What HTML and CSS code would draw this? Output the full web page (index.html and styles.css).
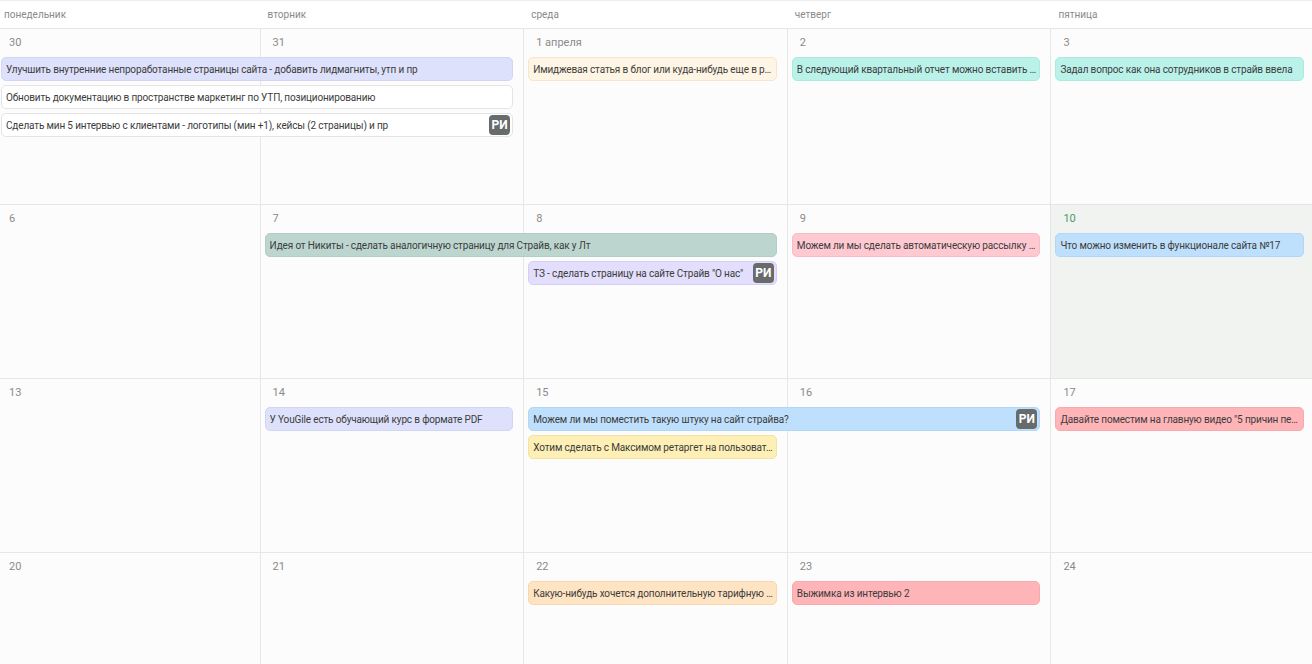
FILE: index.html
```html
<!DOCTYPE html>
<html lang="ru">
    <head>
        <meta charset="utf-8">
        <link rel="stylesheet" href="styles.css">
    </head>
    <body>
        <div class="calendar">
            <div class="weekdays">
                <div class="weekday">понедельник</div>
                <div class="weekday">вторник</div>
                <div class="weekday">среда</div>
                <div class="weekday">четверг</div>
                <div class="weekday">пятница</div>
            </div>

            <div class="week first">
                <div class="day col-1"><span class="num">30</span></div>
                <div class="day col-2"><span class="num">31</span></div>
                <div class="day col-3"><span class="num">1 апреля</span></div>
                <div class="day col-4"><span class="num">2</span></div>
                <div class="day col-5"><span class="num">3</span></div>

                <div class="event lavender col-1 span-2 line-1"><span class="title">Улучшить внутренние непроработанные страницы сайта - добавить лидмагниты, утп и пр</span></div>
                <div class="event plain col-1 span-2 line-2"><span class="title">Обновить документацию в пространстве маркетинг по УТП, позиционированию</span></div>
                <div class="event plain col-1 span-2 line-3"><span class="title">Сделать мин 5 интервью с клиентами - логотипы (мин +1), кейсы (2 страницы) и пр</span><span class="avatar">РИ</span></div>
                <div class="event cream col-3 line-1"><span class="title">Имиджевая статья в блог или куда-нибудь еще в разрезе</span></div>
                <div class="event mint col-4 line-1"><span class="title">В следующий квартальный отчет можно вставить блок</span></div>
                <div class="event mint col-5 line-1"><span class="title">Задал вопрос как она сотрудников в страйв ввела</span></div>
            </div>

            <div class="week">
                <div class="day col-1"><span class="num">6</span></div>
                <div class="day col-2"><span class="num">7</span></div>
                <div class="day col-3"><span class="num">8</span></div>
                <div class="day col-4"><span class="num">9</span></div>
                <div class="day col-5 today"><span class="num">10</span></div>

                <div class="event sage col-2 span-2 line-1"><span class="title">Идея от Никиты - сделать аналогичную страницу для Страйв, как у Лт</span></div>
                <div class="event violet col-3 line-2"><span class="title">ТЗ - сделать страницу на сайте Страйв "О нас"</span><span class="avatar">РИ</span></div>
                <div class="event pink col-4 line-1"><span class="title">Можем ли мы сделать автоматическую рассылку клиентам</span></div>
                <div class="event sky col-5 line-1"><span class="title">Что можно изменить в функционале сайта №17</span></div>
            </div>

            <div class="week">
                <div class="day col-1"><span class="num">13</span></div>
                <div class="day col-2"><span class="num">14</span></div>
                <div class="day col-3"><span class="num">15</span></div>
                <div class="day col-4"><span class="num">16</span></div>
                <div class="day col-5"><span class="num">17</span></div>

                <div class="event lavender col-2 line-1"><span class="title">У YouGile есть обучающий курс в формате PDF</span></div>
                <div class="event sky col-3 span-2 line-1"><span class="title">Можем ли мы поместить такую штуку на сайт страйва?</span><span class="avatar">РИ</span></div>
                <div class="event lemon col-3 line-2"><span class="title">Хотим сделать с Максимом ретаргет на пользователей</span></div>
                <div class="event coral col-5 line-1"><span class="title">Давайте поместим на главную видео "5 причин перейти</span></div>
            </div>

            <div class="week">
                <div class="day col-1"><span class="num">20</span></div>
                <div class="day col-2"><span class="num">21</span></div>
                <div class="day col-3"><span class="num">22</span></div>
                <div class="day col-4"><span class="num">23</span></div>
                <div class="day col-5"><span class="num">24</span></div>

                <div class="event peach col-3 line-1"><span class="title">Какую-нибудь хочется дополнительную тарифную сетку</span></div>
                <div class="event coral col-4 line-1"><span class="title">Выжимка из интервью 2</span></div>
            </div>
        </div>
    </body>
</html>
```

FILE: styles.css
```css
body{
    margin: 0;
    overflow: hidden;
    background-color: #fff;
    font-family: Roboto, "Liberation Sans", sans-serif;
    font-size: 10px;
}
div.calendar{
    margin-left: -4px;
    width: 1318px;
}
div.weekdays{
    display: grid;
    grid-template-columns: repeat(5, 1fr);
    border-top: 1px solid #eee;
    border-bottom: 1px solid #e6e6e6;
    box-sizing: border-box;
    height: 29px;
}
div.weekday{
    padding-left: 8px;
    line-height: 27px;
    color: #8a8a8a;
}
div.week{
    display: grid;
    grid-template-columns: repeat(5, 1fr);
    grid-template-rows: 28px 28px 28px 28px 1fr;
    height: 174px;
    border-bottom: 1px solid #e6e6e6;
    box-sizing: border-box;
}
div.week.first{
    height: 176px;
}
div.day{
    grid-row: 1 / -1;
    border-left: 1px solid #e6e6e6;
    background-color: #fcfcfc;
    padding-left: 12px;
}
div.day.today{
    background-color: #f0f3f0;
}
span.num{
    display: block;
    line-height: 28px;
    font-size: 11px;
    color: #8a8a8a;
}
div.day.today span.num{
    color: #4e9a68;
}
.col-1{ grid-column-start: 1; }
.col-2{ grid-column-start: 2; }
.col-3{ grid-column-start: 3; }
.col-4{ grid-column-start: 4; }
.col-5{ grid-column-start: 5; }
.event.span-2{ grid-column-end: span 2; }
.line-1{ grid-row: 2; }
.line-2{ grid-row: 3; }
.line-3{ grid-row: 4; }

div.event{
    display: flex;
    align-items: center;
    gap: 3px;
    align-self: start;
    height: 24px;
    margin: 0 10px 0 5px;
    padding: 0 2px 0 4px;
    box-sizing: border-box;
    border: 1px solid #e2e2e2;
    border-radius: 5px;
    color: #3c3c3c;
    letter-spacing: -0.15px;
    min-width: 0;
}
span.title{
    flex: 1;
    white-space: nowrap;
    overflow: hidden;
    text-overflow: ellipsis;
}
span.avatar{
    flex: none;
    width: 21px;
    height: 20px;
    line-height: 20px;
    border-radius: 4px;
    background-color: #676b6b;
    color: #fff;
    font-weight: bold;
    font-size: 12px;
    letter-spacing: 0;
    text-align: center;
}

div.event.plain{ background-color: #fff; border-color: #e4e4e4; }
div.event.lavender{ background-color: #dee1fb; border-color: #d2d5f5; }
div.event.violet{ background-color: #e3defb; border-color: #d6cff5; }
div.event.cream{ background-color: #fff5e4; border-color: #f5e6cc; }
div.event.mint{ background-color: #baf2ea; border-color: #abeae1; }
div.event.sage{ background-color: #bcd6cf; border-color: #b0cdc6; }
div.event.pink{ background-color: #ffc9d2; border-color: #f8bcc6; }
div.event.sky{ background-color: #bfe0fc; border-color: #b1d6f6; }
div.event.lemon{ background-color: #fdefb6; border-color: #f4e39e; }
div.event.coral{ background-color: #ffb5b8; border-color: #f6aaae; }
div.event.peach{ background-color: #ffe4c3; border-color: #f6d7ae; }
```
